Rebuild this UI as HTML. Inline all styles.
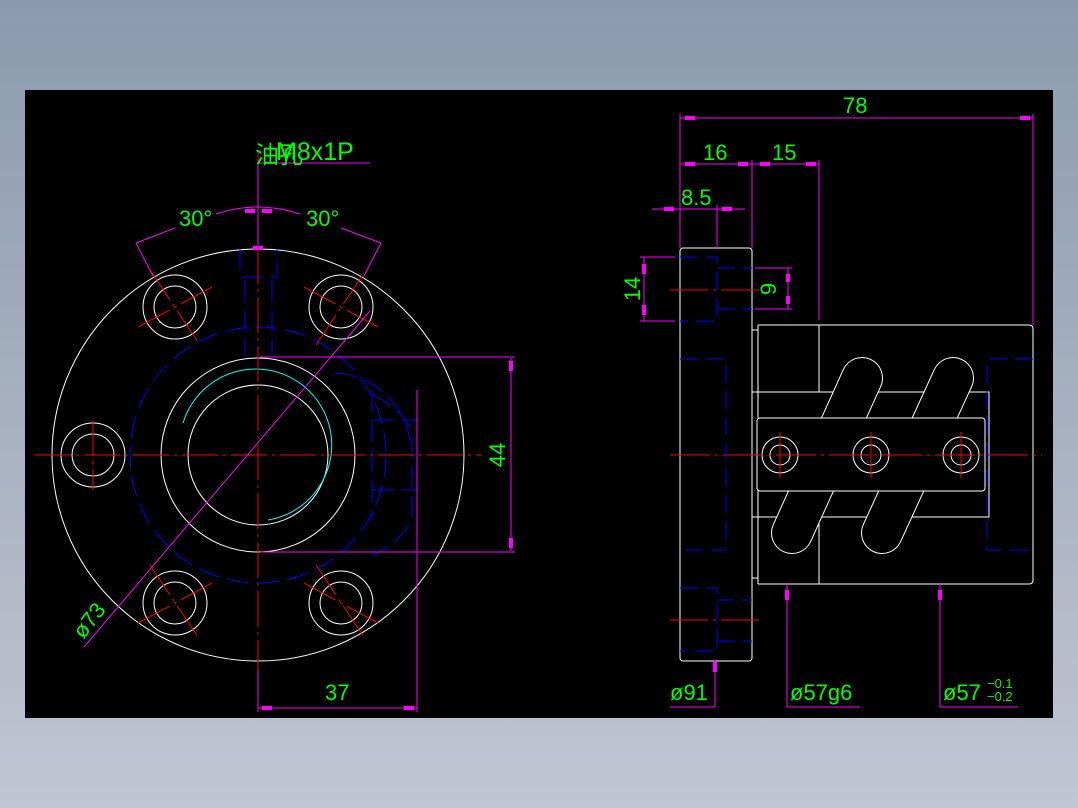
<!DOCTYPE html>
<html><head><meta charset="utf-8"><style>
html,body{margin:0;padding:0}
body{width:1078px;height:808px;background:linear-gradient(#8a9aae 0%,#a6b0c0 50%,#c0c6d2 100%);position:relative;overflow:hidden}
svg{position:absolute;left:0;top:0}
text{font-family:"Liberation Sans","Noto Sans CJK SC",sans-serif;fill:#00ff00;font-size:22px}
</style></head><body>
<svg width="1078" height="808" viewBox="0 0 1078 808">
<rect x="25" y="90" width="1028" height="628" fill="#000"/>
<g fill="none" stroke-width="1">
<!-- LEFT VIEW -->
<g stroke="#fff">
<circle cx="258" cy="455" r="206"/>
<circle cx="258" cy="455" r="97"/>
<circle cx="258" cy="455" r="70"/>
<circle cx="175" cy="307" r="32"/><circle cx="175" cy="307" r="21"/>
<circle cx="341" cy="307" r="32"/><circle cx="341" cy="307" r="21"/>
<circle cx="93" cy="455" r="32"/><circle cx="93" cy="455" r="21"/>
<circle cx="175" cy="603" r="32"/><circle cx="175" cy="603" r="21"/>
<circle cx="341" cy="603" r="32"/><circle cx="341" cy="603" r="21"/>
</g>
<path d="M183 423 A76 76 0 1 1 268 520" stroke="#0ff"/>
<g stroke="#00f" stroke-dasharray="22 8">
<circle cx="258" cy="455" r="128"/>
<path d="M240 248 V277 H277 V248 M245 280 V355 M272 280 V355"/>
<path d="M272 357 H418 M272 552 H418"/>
<path d="M372 395 A80 80 0 0 1 412 430 V520 A80 80 0 0 1 372 555"/>
<path d="M372 390 V520 M372 420 H418 M372 490 H418"/>
<path d="M335 373 A80 80 0 0 1 410 440"/>
</g>
<g stroke="#f00" stroke-dasharray="36 5 3 5">
<path d="M258 150 V680 M35 455 H482"/>
<path d="M150 270 L200 345 M138 327 L212 287 M150 565 L200 640 M138 623 L212 583"/>
<path d="M316 345 L366 270 M304 287 L378 327 M316 565 L366 640 M304 583 L378 623 M93 420 V490"/>
</g>
<g stroke="#f0f">
<path d="M258 163 H370 M258 163 V248"/>
<path d="M216 214 Q258 200 300 214 M136 243 L175 228 M341 228 L381 243"/>
<path d="M136 243 L153 276 M381 243 L364 276"/>
<path d="M84 647 L370 311"/>
<path d="M260 357 H515 M260 552 H515 M511 358 V551"/>
<path d="M417 390 V712 M258 670 V712 M258 708 H417"/>
</g>
<!-- RIGHT VIEW -->
<g stroke="#fff">
<rect x="680" y="248" width="72" height="413" rx="3"/>
<path d="M752 330 H758 M752 578 H758 M758 325 V584"/>
<path d="M758 325 H1029 Q1033 325 1033 329 V580 Q1033 584 1029 584 H758"/>
<path d="M819 325 V392 M819 517 V584 M752 392 H989 V517 H752"/>
</g>
<g stroke-linecap="round">
<path d="M862 378 L792 533 M953 378 L882 533" stroke="#fff" stroke-width="42"/>
<path d="M862 378 L792 533 M953 378 L882 533" stroke="#000" stroke-width="40"/>
</g>
<rect x="757" y="418" width="228" height="73" rx="3" stroke="#fff" fill="#000"/>
<g stroke="#fff">
<circle cx="780" cy="455" r="18"/><circle cx="780" cy="455" r="10"/>
<circle cx="871" cy="455" r="18"/><circle cx="871" cy="455" r="10"/>
<circle cx="961" cy="455" r="18"/><circle cx="961" cy="455" r="10"/>
</g>
<g stroke="#f00">
<path d="M670 455 H1042" stroke-dasharray="40 5 3 5"/>
<path d="M780 432 V478 M871 432 V478 M961 432 V478"/>
<path d="M670 290 H760 M670 620 H760" stroke-dasharray="38 5 3 5"/>
</g>
<g stroke="#00f" stroke-dasharray="18 8">
<path d="M680 359 H726 V550 H680"/>
<path d="M1033 359 H987 V550 H1033"/>
<path d="M680 257 H717 V321 H680 M717 268 H752 M717 309 H752"/>
<path d="M680 588 H717 V651 H680 M717 600 H752 M717 641 H752"/>
</g>
<g stroke="#f0f">
<path d="M680 118 H1033 M680 114 V248 M1033 114 V325"/>
<path d="M680 164 H819 M752 160 V248 M819 160 V320"/>
<path d="M652 209 H745 M717 205 V248"/>
<path d="M640 257 H675 M640 321 H675 M644 257 V321"/>
<path d="M755 268 H792 M755 309 H792 M788 268 V309"/>
<path d="M715 661 V707 H670 M787 584 V707 H860 M940 584 V707 H1018"/>
</g>
</g>
<g fill="#f0f">
<rect x="253" y="246" width="10" height="4"/>
<rect x="685" y="116" width="10" height="4"/><rect x="1020" y="116" width="10" height="4"/>
<rect x="685" y="162" width="10" height="4"/><rect x="738" y="162" width="10" height="4"/>
<rect x="760" y="162" width="10" height="4"/><rect x="806" y="162" width="10" height="4"/>
<rect x="664" y="207" width="10" height="4"/><rect x="722" y="207" width="10" height="4"/>
<rect x="642" y="264" width="4" height="10"/><rect x="642" y="305" width="4" height="10"/>
<rect x="786" y="274" width="4" height="8"/><rect x="786" y="296" width="4" height="8"/>
<rect x="713" y="662" width="4" height="10"/><rect x="785" y="590" width="4" height="10"/><rect x="938" y="590" width="4" height="10"/>
<rect x="509" y="361" width="4" height="10"/><rect x="509" y="538" width="4" height="10"/>
<rect x="262" y="706" width="10" height="4"/><rect x="404" y="706" width="10" height="4"/>
<rect x="245" y="209" width="10" height="4"/><rect x="262" y="209" width="10" height="4"/>
</g>
<g>
<text x="255" y="163" style="font-size:24px">油孔</text>
<text x="276" y="160" style="font-size:25px">M8x1P</text>
<text x="179" y="226">30°</text>
<text x="306" y="226">30°</text>
<text x="325" y="700">37</text>
<text transform="translate(505 455) rotate(-90)" text-anchor="middle">44</text>
<text transform="translate(95 625) rotate(-52)" text-anchor="middle">ø73</text>
<text x="843" y="113">78</text>
<text x="703" y="160">16</text>
<text x="772" y="160">15</text>
<text x="681" y="205">8.5</text>
<text transform="translate(640 289) rotate(-90)" text-anchor="middle">14</text>
<text transform="translate(776 289) rotate(-90)" text-anchor="middle">9</text>
<text x="670" y="700">ø91</text>
<text x="790" y="700">ø57g6</text>
<text x="943" y="700">ø57</text>
<text x="987" y="688" style="font-size:13px">−0.1</text>
<text x="987" y="701" style="font-size:13px">−0.2</text>
</g>
</svg>
</body></html>
